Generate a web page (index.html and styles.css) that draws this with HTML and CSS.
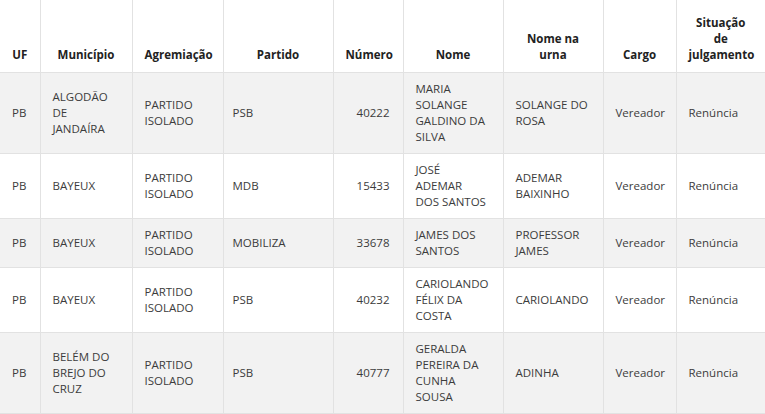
FILE: index.html
```html
<!DOCTYPE html>
<html lang="pt-BR">
<head>
<meta charset="utf-8">
<title>Candidatos</title>
<link rel="stylesheet" href="styles.css">
</head>
<body>
<table class="grid">
  <colgroup>
    <col class="c-uf"><col class="c-mun"><col class="c-agr"><col class="c-par"><col class="c-num"><col class="c-nome"><col class="c-urna"><col class="c-cargo"><col class="c-sit">
  </colgroup>
  <thead>
    <tr>
      <th>UF</th><th>Município</th><th>Agremiação</th><th>Partido</th><th>Número</th><th>Nome</th><th>Nome na urna</th><th>Cargo</th><th>Situação de julgamento</th>
    </tr>
  </thead>
  <tbody>
    <tr>
      <td>PB</td><td>ALGODÃO DE JANDAÍRA</td><td>PARTIDO ISOLADO</td><td class="par">PSB</td><td class="num">40222</td><td>MARIA SOLANGE GALDINO DA SILVA</td><td>SOLANGE DO ROSA</td><td>Vereador</td><td>Renúncia</td>
    </tr>
    <tr>
      <td>PB</td><td>BAYEUX</td><td>PARTIDO ISOLADO</td><td class="par">MDB</td><td class="num">15433</td><td>JOSÉ ADEMAR DOS SANTOS</td><td>ADEMAR BAIXINHO</td><td>Vereador</td><td>Renúncia</td>
    </tr>
    <tr>
      <td>PB</td><td>BAYEUX</td><td>PARTIDO ISOLADO</td><td class="par">MOBILIZA</td><td class="num">33678</td><td>JAMES DOS SANTOS</td><td>PROFESSOR JAMES</td><td>Vereador</td><td>Renúncia</td>
    </tr>
    <tr>
      <td>PB</td><td>BAYEUX</td><td>PARTIDO ISOLADO</td><td class="par">PSB</td><td class="num">40232</td><td>CARIOLANDO FÉLIX DA COSTA</td><td>CARIOLANDO</td><td>Vereador</td><td>Renúncia</td>
    </tr>
    <tr>
      <td>PB</td><td>BELÉM DO BREJO DO CRUZ</td><td>PARTIDO ISOLADO</td><td class="par">PSB</td><td class="num">40777</td><td>GERALDA PEREIRA DA CUNHA SOUSA</td><td>ADINHA</td><td>Vereador</td><td>Renúncia</td>
    </tr>
  </tbody>
</table>
</body>
</html>
```

FILE: styles.css
```css
html, body {
  margin: 0;
  padding: 0;
  background: #ffffff;
}

body {
  font-family: "Open Sans", "Noto Sans", "Liberation Sans", sans-serif;
  font-size: 11.5px;
  line-height: 16px;
  color: #3c3c3c;
}

.grid {
  width: 765px;
  table-layout: fixed;
  border-collapse: collapse;
}

.c-uf { width: 40px; }
.c-mun { width: 92px; }
.c-agr { width: 91px; }
.c-par { width: 110px; }
.c-num { width: 70px; }
.c-nome { width: 100px; }
.c-urna { width: 100px; }
.c-cargo { width: 73px; }
.c-sit { width: 89px; }

.grid th,
.grid td {
  border: 1px solid #e2e2e2;
  padding: 8px 14px 8px 12px;
  text-align: left;
  vertical-align: middle;
}

.grid th {
  border-top: none;
  height: 55px;
  padding: 8px 12px 9px 12px;
  vertical-align: bottom;
  text-align: center;
  font-weight: 700;
  color: #222222;
}

.grid th:first-child,
.grid td:first-child {
  border-left: none;
}

.grid th:last-child,
.grid td:last-child {
  border-right: none;
}

.grid tbody tr:nth-child(odd) td {
  background: #f2f2f2;
}

.grid td.num {
  text-align: right;
  padding-right: 13px;
}

.grid td.par {
  padding-left: 9px;
}
```
